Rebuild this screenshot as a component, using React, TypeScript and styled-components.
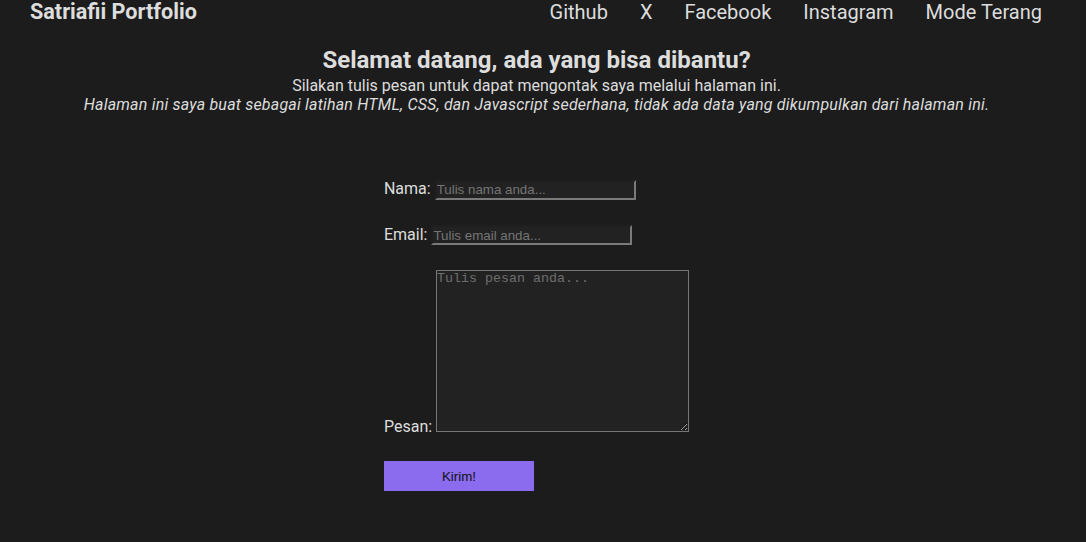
import React from 'react';
import styled, { createGlobalStyle } from 'styled-components';

const GlobalStyle = createGlobalStyle`
  html, body {
    margin: 0;
    padding: 0;
    background: #1c1c1c;
  }
  body {
    font-family: Roboto, "Liberation Sans", sans-serif;
    color: #dddddd;
  }
`;

const Page = styled.div`
  padding: 0 43px 0 30px;
  min-height: 542px;
`;

const NavBar = styled.header`
  display: flex;
  justify-content: space-between;
  align-items: center;
  height: 23px;
`;

const Brand = styled.div`
  font-size: 21.6px;
  font-weight: 700;
`;

const NavLinks = styled.nav`
  display: flex;
  gap: 32px;
  padding-right: 1px;
`;

const NavLink = styled.a`
  font-size: 20px;
  color: #dddddd;
  text-decoration: none;
  cursor: pointer;
`;

const Intro = styled.section`
  margin-top: 23px;
  text-align: center;
`;

const Heading = styled.h1`
  margin: 0 0 2px;
  font-size: 24px;
  font-weight: 700;
`;

const Line = styled.p<{ $italic?: boolean }>`
  margin: 0;
  font-size: 16px;
  font-style: ${p => (p.$italic ? 'italic' : 'normal')};
  letter-spacing: ${p => (p.$italic ? '0.2px' : '0')};
`;

const Form = styled.form`
  width: fit-content;
  margin: 65px auto 0;
  display: flex;
  flex-direction: column;
  gap: 25px;
`;

const Row = styled.div`
  font-size: 16px;
`;

const Label = styled.label`
  font-size: 16px;
`;

const TextInput = styled.input`
  box-sizing: border-box;
  width: 201px;
  height: 20px;
  padding: 1px 0;
  background: #222222;
  color: #dddddd;
  font-family: "Liberation Sans", Arial, sans-serif;
  font-size: 13.33px;
  border-style: solid;
  border-width: 2px;
  border-color: #1f1f1f #7a7a7a #7a7a7a #1f1f1f;
  outline: none;
  &::placeholder {
    color: #757575;
  }
`;

const Message = styled.textarea`
  box-sizing: border-box;
  width: 253px;
  height: 162px;
  margin: 0;
  padding: 0 0 1px 0;
  background: #222222;
  color: #dddddd;
  border: 1px solid #767676;
  font-family: "Liberation Mono", monospace;
  font-size: 13.33px;
  outline: none;
  &::placeholder {
    color: #6e6e6e;
  }
`;

const SubmitButton = styled.button`
  width: 150px;
  height: 30px;
  border: none;
  background: #8b6cef;
  color: #111111;
  font-family: "Liberation Sans", Arial, sans-serif;
  font-size: 13.33px;
  cursor: pointer;
`;

const links = ['Github', 'X', 'Facebook', 'Instagram', 'Mode Terang'];

const App = () => {
  return (
    <Page>
      <GlobalStyle />
      <NavBar>
        <Brand>Satriafii Portfolio</Brand>
        <NavLinks>
          {links.map(link => (
            <NavLink key={link}>{link}</NavLink>
          ))}
        </NavLinks>
      </NavBar>

      <Intro>
        <Heading>Selamat datang, ada yang bisa dibantu?</Heading>
        <Line>Silakan tulis pesan untuk dapat mengontak saya melalui halaman ini.</Line>
        <Line $italic>
          Halaman ini saya buat sebagai latihan HTML, CSS, dan Javascript sederhana, tidak ada
          data yang dikumpulkan dari halaman ini.
        </Line>
      </Intro>

      <Form onSubmit={e => e.preventDefault()}>
        <Row>
          <Label htmlFor="nama">Nama:</Label> <TextInput id="nama" placeholder="Tulis nama anda..." />
        </Row>
        <Row>
          <Label htmlFor="email">Email:</Label> <TextInput id="email" placeholder="Tulis email anda..." />
        </Row>
        <Row>
          <Label htmlFor="pesan">Pesan:</Label> <Message id="pesan" placeholder="Tulis pesan anda..." />
        </Row>
        <Row>
          <SubmitButton type="submit">Kirim!</SubmitButton>
        </Row>
      </Form>
    </Page>
  );
};

export default App;
